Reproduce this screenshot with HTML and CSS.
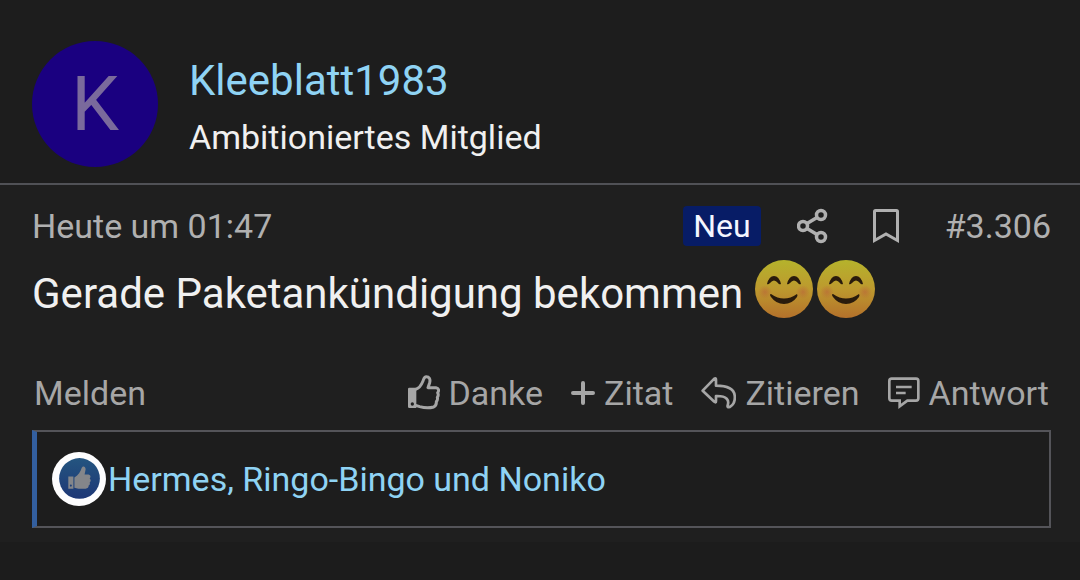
FILE: index.html
```html
<!DOCTYPE html>
<html lang="de">
<head>
    <meta charset="UTF-8">
    <meta name="viewport" content="width=device-width, initial-scale=1.0">
    <title>Beitrag #3.306</title>
    <link rel="stylesheet" href="styles.css">
</head>
<body>
    <article class="post">
        <!-- Benutzer -->
        <header class="post-user">
            <a href="#" class="avatar">K</a>
            <div class="user-info">
                <a href="#" class="user-name">Kleeblatt1983</a>
                <div class="user-title">Ambitioniertes Mitglied</div>
            </div>
        </header>

        <div class="post-main">
            <div class="post-meta">
                <a href="#" class="post-date">Heute um 01:47</a>
                <span class="badge">Neu</span>
                <button type="button" class="icon-button share" aria-label="Teilen">
                    <svg width="32" height="36" viewBox="0 0 32 36" fill="none" stroke="currentColor" stroke-width="3.500">
                        <circle cx="6" cy="18" r="4.500"/>
                        <circle cx="24" cy="7" r="4.500"/>
                        <circle cx="24" cy="29" r="4.500"/>
                        <path d="M10 15.500 20 9.500M10 20.500 20 26.500"/>
                    </svg>
                </button>
                <button type="button" class="icon-button bookmark" aria-label="Lesezeichen">
                    <svg width="28" height="36" viewBox="0 0 28 36" fill="none" stroke="currentColor" stroke-width="3">
                        <path d="M2.500 32.500V3.500Q2.500 2.500 3.500 2.500H24.500Q25.500 2.500 25.500 3.500V32.500L14 26Z"/>
                    </svg>
                </button>
                <a href="#" class="post-number">#3.306</a>
            </div>

            <div class="message">
                Gerade Paketankündigung bekommen
                <span class="smilies">
                    <svg class="smilie" viewBox="0 0 58 58" role="img" aria-label="lächelnd">
                        <defs>
                            <linearGradient id="face" x1="0" y1="0" x2="0" y2="1">
                                <stop offset="0" stop-color="#b5b32c"/>
                                <stop offset=".5" stop-color="#bd992e"/>
                                <stop offset="1" stop-color="#b4712b"/>
                            </linearGradient>
                            <radialGradient id="cheek">
                                <stop offset="0" stop-color="#b9623a" stop-opacity=".6"/>
                                <stop offset="1" stop-color="#b9623a" stop-opacity="0"/>
                            </radialGradient>
                        </defs>
                        <circle cx="29" cy="29" r="29" fill="url(#face)"/>
                        <circle cx="10" cy="32" r="7" fill="url(#cheek)"/>
                        <circle cx="48" cy="32" r="7" fill="url(#cheek)"/>
                        <path d="M12 24Q14 16 19 16T26 24Q24 25 23 23Q19 18 15 23Q13 25 12 24ZM32 24Q34 16 39 16T46 24Q44 25 43 23Q39 18 35 23Q33 25 32 24Z" fill="#291b0c"/>
                        <path d="M16 34Q29 43 42 34Q43 35 42 37Q37 44 29 44T16 37Q14 34 16 34Z" fill="#291b0c"/>
                    </svg>
                    <svg class="smilie" viewBox="0 0 58 58" role="img" aria-label="lächelnd">
                        <circle cx="29" cy="29" r="29" fill="url(#face)"/>
                        <circle cx="10" cy="32" r="7" fill="url(#cheek)"/>
                        <circle cx="48" cy="32" r="7" fill="url(#cheek)"/>
                        <path d="M12 24Q14 16 19 16T26 24Q24 25 23 23Q19 18 15 23Q13 25 12 24ZM32 24Q34 16 39 16T46 24Q44 25 43 23Q39 18 35 23Q33 25 32 24Z" fill="#291b0c"/>
                        <path d="M16 34Q29 43 42 34Q43 35 42 37Q37 44 29 44T16 37Q14 34 16 34Z" fill="#291b0c"/>
                    </svg>
                </span>
            </div>

            <!-- Aktionen -->
            <div class="actions">
                <a href="#" class="report">Melden</a>
                <button type="button" class="action">
                    <svg width="32" height="36" viewBox="48 30 96 108" fill="none">
                        <path fill="currentColor" fill-rule="evenodd" d="M52 68H73V129H52Q48 129 48 125V72Q48 68 52 68ZM61 112A5 5 0 1 0 61 122A5 5 0 1 0 61 112Z"/>
                        <path stroke="currentColor" stroke-width="9" stroke-linejoin="round" d="M71 73C82 70 89 58 93 48C96 40 96 35 103 35C111 35 116 42 113 53L108 68H132C140 69 142 77 137 83Q141 90 136 97Q138 105 133 110Q134 121 125 126C111 130 94 128 83 125L71 121"/>
                    </svg>
                    Danke
                </button>
                <button type="button" class="action">
                    <svg width="24" height="36" viewBox="0 0 24 36" fill="none" stroke="currentColor" stroke-width="4" stroke-linecap="round">
                        <path d="M12 8V28M2 18H22"/>
                    </svg>
                    Zitat
                </button>
                <button type="button" class="action">
                    <svg width="35" height="36" viewBox="29 32 105 108" fill="none" stroke="currentColor" stroke-width="8" stroke-linejoin="round">
                        <path d="M34 79 69 43Q74 40 74 46V64C103 64 127 70 130 93C132 108 127 121 115 128Q107 130 109 123C114 109 108 94 74 95V110Q74 117 69 112Z"/>
                    </svg>
                    Zitieren
                </button>
                <button type="button" class="action">
                    <svg width="32" height="36" viewBox="590 32 96 108" fill="none" stroke="currentColor" stroke-width="8">
                        <path d="M601 43H674Q681 43 681 50V102Q681 109 674 109H648L625 126V109H601Q594 109 594 102V50Q594 43 601 43Z"/>
                        <path d="M614 68H661M614 86H643"/>
                    </svg>
                    Antwort
                </button>
            </div>

            <div class="reactions">
                <svg class="reaction-icon" viewBox="0 0 53 53" aria-hidden="true">
                    <defs>
                        <linearGradient id="like" x1="0" y1="0" x2="0" y2="1">
                            <stop offset="0" stop-color="#245580"/>
                            <stop offset="1" stop-color="#1d3776"/>
                        </linearGradient>
                    </defs>
                    <circle cx="26.500" cy="26.500" r="26.500" fill="#fdfdfe"/>
                    <circle cx="27" cy="26" r="20" fill="url(#like)"/>
                    <path fill="#84868a" fill-rule="evenodd" d="M16 24H21V36H16ZM18.500 32A1 1 0 1 0 18.500 34A1 1 0 1 0 18.500 32Z"/>
                    <path fill="#84868a" d="M22 25C26 23 28 19 29 16C30 13 33 14 33 17L32 22H36Q39 23 37 26Q39 28 37 30Q38 32 36 33Q36 36 33 36H26L22 35Z"/>
                </svg>
                <a href="#" class="reaction-names">Hermes, Ringo-Bingo und Noniko</a>
            </div>
        </div>
    </article>
</body>
</html>
```
FILE: styles.css
```css
body {
    margin: 0;
    background-color: #1c1c1c;
    color: #f0f0f0;
    font-family: Roboto, Arial, sans-serif;
    font-size: 34px;
    line-height: 40px;
}
a {
    color: inherit;
    text-decoration: none;
}
button {
    padding: 0;
    border: 0;
    background: none;
    color: inherit;
    font: inherit;
    cursor: pointer;
}
svg {
    display: block;
    flex-shrink: 0;
}
.post {
    background-color: #1f1f1f;
}
.post-user {
    display: flex;
    align-items: center;
    gap: 31px;
    padding: 41px 32px 16px;
    background-color: #1d1d1d;
    border-bottom: 2px solid #505156;
}
.avatar {
    display: flex;
    align-items: center;
    justify-content: center;
    width: 126px;
    height: 126px;
    border-radius: 50%;
    background-color: #1a0080;
    color: #7a6a9c;
    font-size: 76px;
}
.user-info {
    padding-top: 2px;
}
.user-name {
    display: block;
    margin-bottom: 8px;
    color: #8fd3f4;
    font-size: 42px;
    line-height: 56px;
}
.post-main {
    padding: 21px 29px 14px 32px;
}
.post-meta {
    display: flex;
    align-items: center;
    color: #b0b0b0;
}
.post-date {
    margin-right: auto;
}
.badge {
    padding: 0 10px;
    border-radius: 4px;
    background-color: #071c66;
    color: #f4f6ff;
    font-size: 32px;
}
.share {
    margin-left: 36px;
}
.bookmark {
    margin-left: 43px;
}
.post-number {
    margin-left: 45px;
}
.message {
    display: flex;
    align-items: flex-end;
    gap: 12px;
    margin-top: 14px;
    font-size: 42px;
    line-height: 48px;
}
.smilies {
    display: flex;
    gap: 4px;
}
.smilie {
    width: 58px;
    height: 58px;
}
.actions {
    display: flex;
    align-items: center;
    gap: 28px;
    margin-top: 55px;
    padding: 0 2px;
    color: #a6a6a6;
}
.report {
    margin-right: auto;
}
.action {
    display: flex;
    align-items: center;
    gap: 9px;
}
.reactions {
    display: flex;
    align-items: center;
    gap: 2px;
    margin-top: 17px;
    padding: 20px 15px;
    border: 2px solid #545459;
    border-left: 5px solid #335f9f;
    background-color: #1d1d1d;
    color: #8fd3f4;
}
.reaction-icon {
    width: 54px;
    height: 54px;
}
```
